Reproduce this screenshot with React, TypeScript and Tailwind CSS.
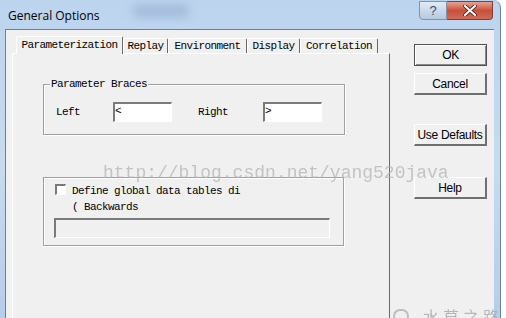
import React from "react";

const mono = "font-['Liberation_Mono','DejaVu_Sans_Mono',monospace] text-[11px] tracking-[-0.6px] text-black";

const tabs = [
  { label: "Parameterization", w: "w-[107px]", active: true },
  { label: "Replay", w: "w-[45px]" },
  { label: "Environment", w: "w-[79px]" },
  { label: "Display", w: "w-[53px]" },
  { label: "Correlation", w: "w-[78px]" },
];

function Sunken({ className = "", children }: { className?: string; children?: React.ReactNode }) {
  return (
    <div className={"border-t-2 border-l-2 border-t-[#7a7a7a] border-l-[#7a7a7a] border-b border-r border-b-white border-r-white " + className}>
      {children}
    </div>
  );
}

function Btn({ label, def, className = "" }: { label: string; def?: boolean; className?: string }) {
  return (
    <button
      className={
        "block w-[73px] h-[22px] bg-[#f0f0f0] font-['Liberation_Sans',Arial,sans-serif] text-[12px] text-black tracking-[-0.3px] " +
        (def
          ? "border border-[#505050] shadow-[inset_1px_1px_0_#fff,inset_-1px_-1px_0_#8a8a8a] "
          : "border-t border-l border-t-white border-l-white border-b-2 border-r-2 border-b-[#6f6f6f] border-r-[#6f6f6f] ") +
        className
      }
    >
      {label}
    </button>
  );
}

function Group({ className = "", legend, children }: { className?: string; legend?: string; children?: React.ReactNode }) {
  return (
    <div className={"relative border border-[#a0a0a0] shadow-[1px_1px_0_#fff,inset_1px_1px_0_#fff] " + className}>
      {legend && (
        <span className={"absolute -top-[9px] left-[6px] px-[1px] bg-[#f0f0f0] " + mono}>{legend}</span>
      )}
      {children}
    </div>
  );
}

export default function App() {
  return (
    <div className="relative w-[506px] h-[318px] overflow-hidden bg-white">
      <div className="w-[501px] h-[334px] rounded-tr-[8px] border-r border-[#6b819c] bg-gradient-to-b from-[#bcd4ee] via-[#c6dbf1] to-[#b3cce8] flex flex-col pl-[5px] pr-[6px]">
        {/* title bar */}
        <div className="relative h-[29px] flex items-start">
          <span className="mt-[7px] ml-[3px] font-['Open_Sans','Noto_Sans',sans-serif] text-[12px] text-black">General Options</span>
          <div className="absolute left-[127px] top-[4px] w-[58px] h-[14px] rounded-full bg-[#9fb8d6] blur-[4px] opacity-80" />
          <div className="ml-auto mr-[1px] mt-[1px] flex">
            <div className="w-[28px] h-[19px] rounded-bl-[4px] border border-[#7d94b0] bg-gradient-to-b from-[#e2ebf5] to-[#b6c9df] flex items-center justify-center font-['Liberation_Sans',sans-serif] text-[13px] text-[#3d4d62]">?</div>
            <div className="w-[46px] h-[19px] rounded-br-[4px] border border-l-0 border-[#8a3a2e] bg-gradient-to-b from-[#e6a394] via-[#c8503a] to-[#cf6a55] flex items-center justify-center">
              <svg width="14" height="11" viewBox="0 0 14 11">
                <path d="M2 1 L12 10 M12 1 L2 10" stroke="#3b1a14" strokeWidth="3.6" strokeLinecap="round" />
                <path d="M2 1 L12 10 M12 1 L2 10" stroke="#fff" strokeWidth="2.2" strokeLinecap="round" />
              </svg>
            </div>
          </div>
        </div>

        {/* client area */}
        <div className="flex-1 border-l border-t border-[#6d7f95] bg-[#f0f0f0] flex">
          {/* tab control */}
          <div className="ml-[6px] w-[378px] flex flex-col pt-[6px]">
            <div className="flex items-end h-[17px] pl-[4px]">
              {tabs.map((t) => (
                <div
                  key={t.label}
                  className={
                    t.w +
                    " rounded-t-[2px] border-t border-l border-t-white border-l-white border-r border-r-[#696969] flex items-center justify-center " +
                    mono +
                    (t.active ? " h-[18px] -mb-[1px] bg-[#f0f0f0] relative z-10 pb-[1px]" : " h-[15px]")
                  }
                >
                  {t.label}
                </div>
              ))}
            </div>
            <div className="h-[266px] border-t border-l border-t-white border-l-white border-r border-b border-r-[#696969] border-b-[#696969] flex flex-col pt-[30px] pl-[30px]">
              <Group legend="Parameter Braces" className="w-[302px] h-[51px]">
                <div className="flex items-center mt-[17px] h-[20px]">
                  <span className={"ml-[12px] w-[57px] " + mono}>Left</span>
                  <Sunken className="w-[59px] h-[20px] bg-white">
                    <span className={"block leading-[15px] " + mono}>&lt;</span>
                  </Sunken>
                  <span className={"ml-[26px] w-[65px] " + mono}>Right</span>
                  <Sunken className="w-[59px] h-[20px] bg-white">
                    <span className={"block leading-[15px] " + mono}>&gt;</span>
                  </Sunken>
                </div>
              </Group>
              <Group className="mt-[42px] w-[301px] h-[69px]">
                <div className="flex items-start mt-[6px] ml-[11px]">
                  <Sunken className="w-[11px] h-[11px] bg-white" />
                  <div className={"ml-[6px] -mt-[1px] leading-[16px] " + mono}>
                    <div>Define global data tables di</div>
                    <div>( Backwards</div>
                  </div>
                </div>
                <Sunken className="mt-[3px] ml-[10px] w-[276px] h-[20px] bg-[#f0f0f0]" />
              </Group>
            </div>
          </div>

          {/* buttons */}
          <div className="ml-[24px] pt-[14px] flex flex-col">
            <Btn label="OK" def />
            <Btn label="Cancel" className="mt-[7px]" />
            <Btn label="Use Defaults" className="mt-[29px]" />
            <Btn label="Help" className="mt-[31px]" />
          </div>
        </div>
      </div>

      {/* watermarks */}
      <span className="absolute left-[103px] top-[160px] font-['Liberation_Mono','DejaVu_Sans_Mono',monospace] text-[18px] text-[#b4b4b4] opacity-75 pointer-events-none">
        http://blog.csdn.net/yang520java
      </span>
      <div className="absolute left-[393px] top-[306px] flex items-center gap-[14px] text-[#a8a8a8] opacity-80">
        <span className="w-[16px] h-[14px] rounded-full border-2 border-[#b0b0b0]" />
        <span className="font-['Noto_Sans_CJK_SC',sans-serif] text-[16px] leading-[20px] tracking-[4px]">水草之路</span>
      </div>
    </div>
  );
}
